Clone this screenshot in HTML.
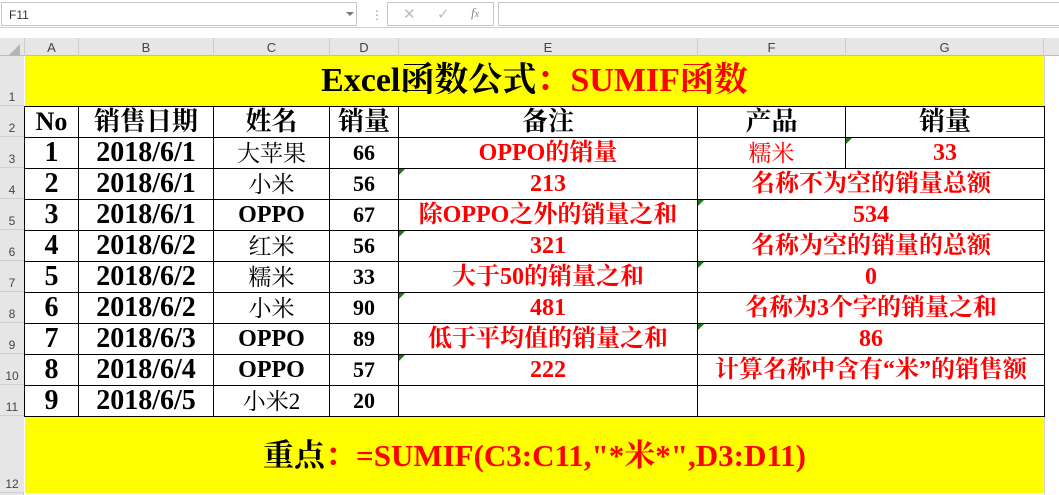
<!DOCTYPE html>
<html><head><meta charset="utf-8"><style>
*{margin:0;padding:0;box-sizing:border-box}
body{width:1059px;height:495px;overflow:hidden;background:#fff;position:relative;font-family:"Liberation Serif","Noto Serif CJK SC",serif}
.a{position:absolute}
.c{position:absolute;display:flex;align-items:center;justify-content:center;border:1px solid #000;font-weight:bold;white-space:nowrap;line-height:1;font-size:24px}
.r{color:#f00}
.n{font-size:23px;font-weight:normal}
.q{font-size:22px}
.d{font-size:28px}
.h{position:absolute;font-family:"Liberation Sans",sans-serif;font-size:13px;color:#444;display:flex;align-items:center;justify-content:center}
.rh{position:absolute;left:0;width:24px;background:#e6e6e6;border-bottom:1px solid #cfcfcf;font-family:"Liberation Sans",sans-serif;font-size:12px;color:#444;display:flex;align-items:flex-end;justify-content:center;padding-bottom:1px}
.tri{position:absolute;width:0;height:0;border-top:6px solid #1e7a1e;border-right:6px solid transparent}
.gl{position:absolute;background:#d4d4d4}
</style></head><body>
<div class="a" style="left:0;top:0;width:1059px;height:33px;background:#fff"></div>
<div class="a" style="left:1px;top:2px;width:356px;height:24px;border:1px solid #c6c6c6;font-family:'Liberation Sans',sans-serif;font-size:12px;color:#333;padding:5px 7px">F11</div>
<div class="a" style="left:346px;top:12px;width:0;height:0;border-left:4px solid transparent;border-right:4px solid transparent;border-top:4px solid #777"></div>
<div class="a" style="left:371px;top:8px;color:#999;font-size:12px;font-family:'Liberation Sans',sans-serif">⋮</div>
<div class="a" style="left:387px;top:2px;width:107px;height:24px;border:1px solid #c6c6c6"></div>
<div class="a" style="left:403px;top:5px;color:#bbb;font-size:15px;font-family:'DejaVu Sans',sans-serif">✕</div>
<div class="a" style="left:437px;top:5px;color:#bbb;font-size:15px;font-family:'DejaVu Sans',sans-serif">✓</div>
<div class="a" style="left:471px;top:5px;color:#888;font-size:13px;font-style:italic">f<span style="font-size:10px">x</span></div>
<div class="a" style="left:498px;top:2px;width:561px;height:24px;border:1px solid #c6c6c6;border-right:none"></div>
<div class="a" style="left:0;top:27px;width:1059px;height:1px;background:#d0d0d0"></div>
<div class="a" style="left:0;top:38px;width:1059px;height:18px;background:#e6e6e6;border-bottom:1px solid #bdbdbd"></div>
<div class="a" style="left:8px;top:44px;width:0;height:0;border-left:12px solid transparent;border-bottom:12px solid #b5b5b5"></div>
<div class="h" style="left:24px;top:38px;width:54px;height:18px;border-left:1px solid #ccc">A</div>
<div class="h" style="left:78px;top:38px;width:135px;height:18px;border-left:1px solid #ccc">B</div>
<div class="h" style="left:213px;top:38px;width:116px;height:18px;border-left:1px solid #ccc">C</div>
<div class="h" style="left:329px;top:38px;width:69px;height:18px;border-left:1px solid #ccc">D</div>
<div class="h" style="left:398px;top:38px;width:299px;height:18px;border-left:1px solid #ccc">E</div>
<div class="h" style="left:697px;top:38px;width:148px;height:18px;border-left:1px solid #ccc">F</div>
<div class="h" style="left:845px;top:38px;width:199px;height:18px;border-left:1px solid #ccc;border-right:1px solid #ccc">G</div>
<div class="a" style="left:0;top:56px;width:24px;height:439px;background:#e6e6e6;border-right:1px solid #bdbdbd"></div>
<div class="rh" style="top:56px;height:50px">1</div>
<div class="rh" style="top:106px;height:31px">2</div>
<div class="rh" style="top:137px;height:31px">3</div>
<div class="rh" style="top:168px;height:31px">4</div>
<div class="rh" style="top:199px;height:31px">5</div>
<div class="rh" style="top:230px;height:31px">6</div>
<div class="rh" style="top:261px;height:31px">7</div>
<div class="rh" style="top:292px;height:31px">8</div>
<div class="rh" style="top:323px;height:31px">9</div>
<div class="rh" style="top:354px;height:31px">10</div>
<div class="rh" style="top:385px;height:31px">11</div>
<div class="rh" style="top:416px;height:77px">12</div>
<div class="gl" style="left:1044px;top:56px;width:1px;height:439px"></div>
<div class="a" style="left:25px;top:56px;width:1019px;height:50px;background:#ff0;display:flex;align-items:center;justify-content:center;font-weight:bold;font-size:34px;padding-top:0px;line-height:1">Excel函数公式<span class="r">：SUMIF函数</span></div>
<div class="a" style="left:25px;top:416px;width:1019px;height:77px;background:#ff0;display:flex;align-items:center;justify-content:center;font-weight:bold;font-size:31px;padding-top:2px;line-height:1">重点<span class="r">：=SUMIF(C3:C11,"*米*",D3:D11)</span></div>
<div class="c" style="left:24px;top:106px;width:55px;height:32px;font-size:26px">No</div>
<div class="c" style="left:78px;top:106px;width:136px;height:32px;font-size:26px">销售日期</div>
<div class="c" style="left:213px;top:106px;width:117px;height:32px;font-size:26px">姓名</div>
<div class="c" style="left:329px;top:106px;width:70px;height:32px;font-size:26px">销量</div>
<div class="c" style="left:398px;top:106px;width:300px;height:32px;font-size:26px">备注</div>
<div class="c" style="left:697px;top:106px;width:149px;height:32px;font-size:26px">产品</div>
<div class="c" style="left:845px;top:106px;width:200px;height:32px;font-size:26px">销量</div>
<div class="c d" style="left:24px;top:137px;width:55px;height:32px">1</div><div class="c d" style="left:78px;top:137px;width:136px;height:32px">2018/6/1</div><div class="c n" style="left:213px;top:137px;width:117px;height:32px">大苹果</div><div class="c q" style="left:329px;top:137px;width:70px;height:32px">66</div>
<div class="c d" style="left:24px;top:168px;width:55px;height:32px">2</div><div class="c d" style="left:78px;top:168px;width:136px;height:32px">2018/6/1</div><div class="c n" style="left:213px;top:168px;width:117px;height:32px">小米</div><div class="c q" style="left:329px;top:168px;width:70px;height:32px">56</div>
<div class="c d" style="left:24px;top:199px;width:55px;height:32px">3</div><div class="c d" style="left:78px;top:199px;width:136px;height:32px">2018/6/1</div><div class="c" style="left:213px;top:199px;width:117px;height:32px">OPPO</div><div class="c q" style="left:329px;top:199px;width:70px;height:32px">67</div>
<div class="c d" style="left:24px;top:230px;width:55px;height:32px">4</div><div class="c d" style="left:78px;top:230px;width:136px;height:32px">2018/6/2</div><div class="c n" style="left:213px;top:230px;width:117px;height:32px">红米</div><div class="c q" style="left:329px;top:230px;width:70px;height:32px">56</div>
<div class="c d" style="left:24px;top:261px;width:55px;height:32px">5</div><div class="c d" style="left:78px;top:261px;width:136px;height:32px">2018/6/2</div><div class="c n" style="left:213px;top:261px;width:117px;height:32px">糯米</div><div class="c q" style="left:329px;top:261px;width:70px;height:32px">33</div>
<div class="c d" style="left:24px;top:292px;width:55px;height:32px">6</div><div class="c d" style="left:78px;top:292px;width:136px;height:32px">2018/6/2</div><div class="c n" style="left:213px;top:292px;width:117px;height:32px">小米</div><div class="c q" style="left:329px;top:292px;width:70px;height:32px">90</div>
<div class="c d" style="left:24px;top:323px;width:55px;height:32px">7</div><div class="c d" style="left:78px;top:323px;width:136px;height:32px">2018/6/3</div><div class="c" style="left:213px;top:323px;width:117px;height:32px">OPPO</div><div class="c q" style="left:329px;top:323px;width:70px;height:32px">89</div>
<div class="c d" style="left:24px;top:354px;width:55px;height:32px">8</div><div class="c d" style="left:78px;top:354px;width:136px;height:32px">2018/6/4</div><div class="c" style="left:213px;top:354px;width:117px;height:32px">OPPO</div><div class="c q" style="left:329px;top:354px;width:70px;height:32px">57</div>
<div class="c d" style="left:24px;top:385px;width:55px;height:32px">9</div><div class="c d" style="left:78px;top:385px;width:136px;height:32px">2018/6/5</div><div class="c n" style="left:213px;top:385px;width:117px;height:32px">小米2</div><div class="c q" style="left:329px;top:385px;width:70px;height:32px">20</div>
<div class="c r" style="left:398px;top:137px;width:300px;height:32px">OPPO的销量</div>
<div class="c r" style="left:398px;top:168px;width:300px;height:32px">213</div>
<div class="c r" style="left:398px;top:199px;width:300px;height:32px">除OPPO之外的销量之和</div>
<div class="c r" style="left:398px;top:230px;width:300px;height:32px">321</div>
<div class="c r" style="left:398px;top:261px;width:300px;height:32px">大于50的销量之和</div>
<div class="c r" style="left:398px;top:292px;width:300px;height:32px">481</div>
<div class="c r" style="left:398px;top:323px;width:300px;height:32px">低于平均值的销量之和</div>
<div class="c r" style="left:398px;top:354px;width:300px;height:32px">222</div>
<div class="c r" style="left:398px;top:385px;width:300px;height:32px"></div>
<div class="c r n" style="left:697px;top:137px;width:149px;height:32px">糯米</div>
<div class="c r" style="left:845px;top:137px;width:200px;height:32px">33</div>
<div class="c r" style="left:697px;top:168px;width:348px;height:32px">名称不为空的销量总额</div>
<div class="c r" style="left:697px;top:199px;width:348px;height:32px">534</div>
<div class="c r" style="left:697px;top:230px;width:348px;height:32px">名称为空的销量的总额</div>
<div class="c r" style="left:697px;top:261px;width:348px;height:32px">0</div>
<div class="c r" style="left:697px;top:292px;width:348px;height:32px">名称为3个字的销量之和</div>
<div class="c r" style="left:697px;top:323px;width:348px;height:32px">86</div>
<div class="c r" style="left:697px;top:354px;width:348px;height:32px">计算名称中含有“米”的销售额</div>
<div class="c r" style="left:697px;top:385px;width:348px;height:32px"></div>
<div class="tri" style="left:399px;top:169px"></div>
<div class="tri" style="left:399px;top:231px"></div>
<div class="tri" style="left:399px;top:293px"></div>
<div class="tri" style="left:399px;top:355px"></div>
<div class="tri" style="left:698px;top:200px"></div>
<div class="tri" style="left:698px;top:262px"></div>
<div class="tri" style="left:698px;top:324px"></div>
<div class="tri" style="left:846px;top:138px"></div>
</body></html>
